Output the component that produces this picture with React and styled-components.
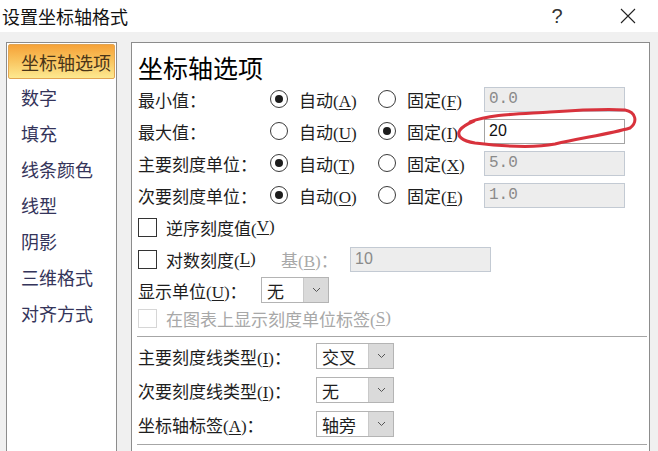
import React from 'react';
import styled, { createGlobalStyle } from 'styled-components';

const GlobalStyle = createGlobalStyle`
  html, body {
    margin: 0;
    padding: 0;
    background: #f0f0f0;
  }
  body {
    font-family: "Liberation Serif", "Noto Sans CJK SC", serif;
  }
`;

const navItems = ['坐标轴选项', '数字', '填充', '线条颜色', '线型', '阴影', '三维格式', '对齐方式'];

const Window = styled.div`
  position: relative;
  width: 658px;
  height: 451px;
  overflow: hidden;
  background: #f0f0f0;
  color: #1e1e1e;
`;

const TitleBar = styled.div`
  height: 32px;
  background: #ffffff;
  display: flex;
  align-items: center;
  padding-left: 2px;
`;

const Caption = styled.div`
  flex: 1;
  font-family: "Noto Sans CJK SC", sans-serif;
  font-size: 18px;
  color: #111;
  line-height: 32px;
`;

const Help = styled.div`
  width: 30px;
  text-align: center;
  font-family: "Liberation Sans", sans-serif;
  font-size: 20px;
  color: #333;
`;

const Close = styled.div`
  width: 30px;
  height: 30px;
  margin: 0 15px 0 41px;
  display: grid;
  place-items: center;
`;

const Body = styled.div`
  display: flex;
  align-items: flex-start;
  padding: 10px 8px 0 6px;
  gap: 14px;
`;

const Nav = styled.div`
  width: 111px;
  height: 480px;
  box-sizing: border-box;
  border: 1px solid #8c8c8c;
  background: #ffffff;
  padding: 1px;
`;

const NavItem = styled.div`
  height: ${({ $active }) => ($active ? '35px' : '36px')};
  box-sizing: border-box;
  display: flex;
  align-items: center;
  padding-left: 12px;
  font-size: 18px;
  color: ${({ $active }) => ($active ? '#4a3518' : '#34345a')};
  border-radius: 2px;
  background: ${({ $active }) =>
    $active ? 'linear-gradient(to bottom, #f6a238 0%, #f9c25c 45%, #fde990 100%)' : 'transparent'};
  border: 1px solid ${({ $active }) => ($active ? '#e2a552' : 'transparent')};
`;

const Panel = styled.div`
  flex: 1;
  height: 480px;
  box-sizing: border-box;
  border: 1px solid #8c8c8c;
  background: #ffffff;
  padding: 8px 2px 0 6px;
`;

const Heading = styled.div`
  font-family: "Noto Sans CJK SC", sans-serif;
  font-size: 25px;
  line-height: 32px;
  color: #000;
`;

const Row = styled.div`
  display: flex;
  align-items: center;
  height: ${({ $h }) => $h}px;
  font-size: 17px;
`;

const Label = styled.div`
  width: ${({ $w }) => $w}px;
  flex-shrink: 0;
  white-space: nowrap;
  color: ${({ $disabled }) => ($disabled ? '#a8a8a8' : '#1e1e1e')};
`;

const Key = styled.span`
  text-decoration: underline;
  text-underline-offset: 2px;
`;

const RadioOption = styled.div`
  width: ${({ $w }) => $w}px;
  flex-shrink: 0;
  display: flex;
  align-items: center;
  gap: 11px;
  white-space: nowrap;
`;

const Circle = styled.span`
  width: 18px;
  height: 18px;
  box-sizing: border-box;
  border: 1px solid #3a3a3a;
  border-radius: 50%;
  display: grid;
  place-items: center;
  background: #fff;
`;

const Dot = styled.span`
  width: 8px;
  height: 8px;
  border-radius: 50%;
  background: #1c1c1c;
`;

const Box = styled.span`
  width: 19px;
  height: 19px;
  box-sizing: border-box;
  flex-shrink: 0;
  border: 1px solid ${({ $disabled }) => ($disabled ? '#d6d6d6' : '#333')};
  background: #fff;
  margin-right: 9px;
`;

const CheckOption = styled.div`
  display: flex;
  align-items: center;
  width: ${({ $w }) => ($w ? `${$w}px` : 'auto')};
  flex-shrink: 0;
  white-space: nowrap;
  color: ${({ $disabled }) => ($disabled ? '#a8a8a8' : '#1e1e1e')};
`;

const Field = styled.div`
  width: ${({ $w }) => $w}px;
  height: ${({ $h }) => $h || 25}px;
  box-sizing: border-box;
  display: flex;
  align-items: center;
  padding-left: 4px;
  border: 1px solid ${({ $disabled }) => ($disabled ? '#c3cad3' : '#a4a4a4')};
  background: ${({ $disabled }) => ($disabled ? '#ededed' : '#ffffff')};
  color: ${({ $disabled }) => ($disabled ? '#8a8a8a' : '#111')};
  font-family: ${({ $mono }) => ($mono ? '"Liberation Mono", monospace' : '"Liberation Sans", sans-serif')};
  font-size: 16px;
`;

const Select = styled.div`
  width: ${({ $w }) => $w}px;
  height: 26px;
  box-sizing: border-box;
  display: flex;
  border: 1px solid #b4b4b4;
  background: #fff;
  margin-left: ${({ $ml }) => $ml || 0}px;
`;

const SelectValue = styled.div`
  flex: 1;
  display: flex;
  align-items: center;
  padding-left: 5px;
  font-size: 17px;
  color: #1e1e1e;
`;

const SelectButton = styled.div`
  width: 24px;
  background: #dadada;
  border-left: 1px solid #c9c9c9;
  display: grid;
  place-items: center;
`;

const Separator = styled.div`
  height: 0;
  border-top: 1px solid #a6a6a6;
  margin: ${({ $mt }) => $mt}px 0 0 -1px;
`;

const Scribble = styled.svg`
  position: absolute;
  left: 450px;
  top: 100px;
  pointer-events: none;
`;

function Chevron() {
  return (
    <svg width="9" height="6" viewBox="0 0 9 6">
      <path d="M1 1 L4.5 4.5 L8 1" fill="none" stroke="#555" strokeWidth="1" />
    </svg>
  );
}

function Radio({ checked, children, w }) {
  return (
    <RadioOption $w={w}>
      <Circle>{checked && <Dot />}</Circle>
      <span>{children}</span>
    </RadioOption>
  );
}

function Dropdown({ value, w, ml }) {
  return (
    <Select $w={w} $ml={ml}>
      <SelectValue>{value}</SelectValue>
      <SelectButton>
        <Chevron />
      </SelectButton>
    </Select>
  );
}

const axisRows = [
  { label: '最小值：', auto: 'A', fixed: 'F', autoOn: true, value: '0.0' },
  { label: '最大值：', auto: 'U', fixed: 'I', autoOn: false, value: '20' },
  { label: '主要刻度单位：', auto: 'T', fixed: 'X', autoOn: true, value: '5.0' },
  { label: '次要刻度单位：', auto: 'O', fixed: 'E', autoOn: true, value: '1.0' },
];

const tickRows = [
  { label: '主要刻度线类型', key: 'I', value: '交叉' },
  { label: '次要刻度线类型', key: 'I', value: '无' },
  { label: '坐标轴标签', key: 'A', value: '轴旁' },
];

export default function App() {
  return (
    <>
      <GlobalStyle />
      <Window>
        <TitleBar>
          <Caption>设置坐标轴格式</Caption>
          <Help>?</Help>
          <Close>
            <svg width="16" height="16" viewBox="0 0 16 16">
              <path d="M1 1 L15 15 M15 1 L1 15" stroke="#222" strokeWidth="1.1" />
            </svg>
          </Close>
        </TitleBar>
        <Body>
          <Nav>
            {navItems.map((item, i) => (
              <NavItem key={item} $active={i === 0}>
                {item}
              </NavItem>
            ))}
          </Nav>
          <Panel>
            <Heading>坐标轴选项</Heading>
            {axisRows.map((r) => (
              <Row $h={32} key={r.label}>
                <Label $w={132}>{r.label}</Label>
                <Radio w={108} checked={r.autoOn}>
                  自动(<Key>{r.auto}</Key>)
                </Radio>
                <Radio w={106} checked={!r.autoOn}>
                  固定(<Key>{r.fixed}</Key>)
                </Radio>
                <Field $w={141} $disabled={r.autoOn} $mono={r.autoOn}>
                  {r.value}
                </Field>
              </Row>
            ))}
            <Row $h={32}>
              <CheckOption>
                <Box />
                逆序刻度值(<Key>V</Key>)
              </CheckOption>
            </Row>
            <Row $h={32}>
              <CheckOption $w={143}>
                <Box />
                对数刻度(<Key>L</Key>)
              </CheckOption>
              <Label $w={69} $disabled>
                基(<Key>B</Key>)：
              </Label>
              <Field $w={141} $h={25} $disabled>
                10
              </Field>
            </Row>
            <Row $h={30}>
              <Label $w={123}>
                显示单位(<Key>U</Key>)：
              </Label>
              <Dropdown w={68} value="无" />
            </Row>
            <Row $h={26}>
              <CheckOption $disabled>
                <Box $disabled />
                在图表上显示刻度单位标签(<Key>S</Key>)
              </CheckOption>
            </Row>
            <Separator $mt={5} />
            <div style={{ height: 2 }} />
            {tickRows.map((r) => (
              <Row $h={34} key={r.label}>
                <Label $w={178}>
                  {r.label}(<Key>{r.key}</Key>)：
                </Label>
                <Dropdown w={78} value={r.value} />
              </Row>
            ))}
            <Separator $mt={3} />
          </Panel>
        </Body>
        <Scribble width="195" height="58" viewBox="0 0 195 58">
          <path
            d="M20 22 C40 14, 70 14, 100 12 C130 10, 160 9, 175 10 C186 12, 188 22, 180 28 C160 34, 130 38, 105 44 C85 48, 50 46, 25 43 C12 41, 6 36, 10 30 C13 26, 17 24, 24 21"
            fill="none"
            stroke="#d8323c"
            strokeWidth="3"
            strokeLinecap="round"
            strokeLinejoin="round"
          />
        </Scribble>
      </Window>
    </>
  );
}
